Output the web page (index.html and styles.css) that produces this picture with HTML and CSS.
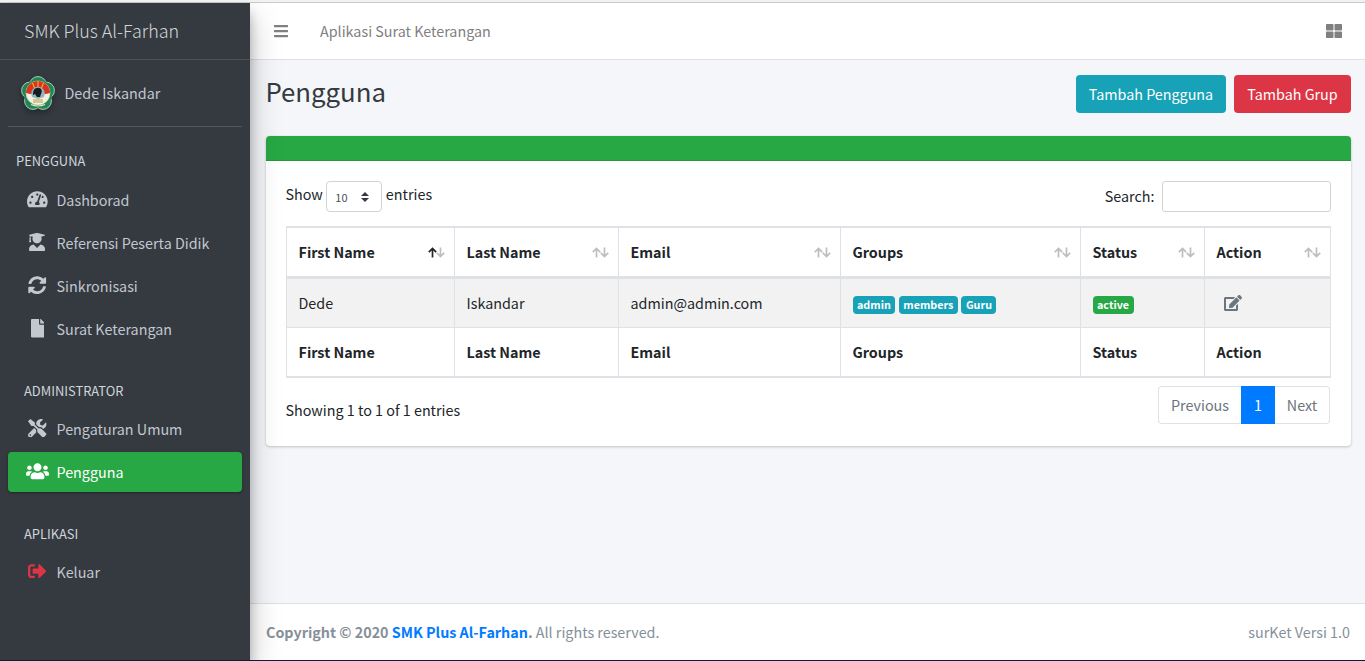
FILE: index.html
```html
<!DOCTYPE html>
<html lang="id">
<head>
<meta charset="utf-8">
<title>Pengguna</title>
<link rel="stylesheet" href="styles.css">
</head>
<body>
<svg class="defs" width="0" height="0">
  <symbol id="up" viewBox="0 0 9 11"><path d="M4.5 10.5V1.5M.8 5.2l3.7-3.8 3.7 3.8" fill="none" stroke="currentColor" stroke-width="1.7"/></symbol>
  <symbol id="down" viewBox="0 0 9 11"><path d="M4.5 .5v9M.8 5.8l3.7 3.8 3.7-3.8" fill="none" stroke="currentColor" stroke-width="1.7"/></symbol>
</svg>
<div class="app">
  <aside class="sidebar">
    <div class="brand"><span class="t-brand">SMK Plus Al-Farhan</span></div>
    <div class="side-body">
      <div class="user">
        <svg class="logo" viewBox="0 0 34 34">
          <g fill="#218653" stroke="#a9cdb9" stroke-width="1"><circle cx="17" cy="9" r="8.400"/><circle cx="25" cy="14.500" r="8.400"/><circle cx="22" cy="25" r="8.400"/><circle cx="12" cy="25" r="8.400"/><circle cx="9" cy="14.500" r="8.400"/></g>
          <circle cx="17" cy="17.500" r="14" fill="#218653"/>
          <circle cx="17" cy="17" r="12" fill="#f2f1e9" stroke="#d2d5a0" stroke-width=".7"/>
          <path d="M5 17a12 12 0 0 1 24 0l-4 1H9z" fill="#d8341f"/>
          <path d="M17 5v6M11.500 7l2 5M22.500 7l-2 5" stroke="#f0b03c" stroke-width="1.100"/>
          <circle cx="17" cy="17.500" r="6.800" fill="#8eb8bd"/>
          <path d="M12 19c0-4 1-7 4-7 4-1 6 3 4 6l-1 3h-3l-2-3z" fill="#171c22"/>
          <path d="M8 22c4-1 6 0 9 1 3-1 5-2 9-1l-2 4H10z" fill="#f4f0dc"/>
          <path d="M12 24h10M12 26h10" stroke="#b39d43" stroke-width="1"/>
          <path d="M10 28.500q7 3 14 0" stroke="#e9e4c8" stroke-width="1.200" fill="none"/>
        </svg>
        <span class="t-user">Dede Iskandar</span>
      </div>
      <nav class="nav">
        <div class="nav-header first"><span>PENGGUNA</span></div>
        <a class="nav-item"><span class="ico"><svg width="20.700" height="18.400" viewBox="0 0 576 512"><path d="M288 32C128.940 32 0 160.940 0 320c0 52.800 14.250 102.260 39.060 144.800 5.610 9.620 16.300 15.200 27.440 15.200h443c11.140 0 21.830-5.580 27.440-15.200C561.750 422.260 576 372.800 576 320c0-159.060-128.940-288-288-288zm0 64c14.710 0 26.580 10.130 30.320 23.650-1.110 2.260-2.640 4.230-3.450 6.670l-9.220 27.670c-5.130 3.490-10.970 6.010-17.640 6.010-17.670 0-32-14.330-32-32S270.330 96 288 96zM96 384c-17.670 0-32-14.330-32-32s14.330-32 32-32 32 14.330 32 32-14.330 32-32 32zm48-160c-17.670 0-32-14.330-32-32s14.330-32 32-32 32 14.330 32 32-14.330 32-32 32zm246.770-72.410l-61.330 184C343.130 347.330 352 364.540 352 384c0 11.720-3.380 22.550-8.880 32H232.880c-5.500-9.450-8.880-20.280-8.880-32 0-33.940 26.500-61.430 59.900-63.590l61.340-184.010c4.170-12.560 17.730-19.450 30.360-15.170 12.570 4.190 19.350 17.790 15.170 30.360zm14.660 57.200l15.520-46.550c3.470-1.290 7.130-2.230 11.050-2.230 17.670 0 32 14.330 32 32s-14.330 32-32 32c-11.380-.01-20.890-6.280-26.570-15.220zM480 384c-17.670 0-32-14.330-32-32s14.330-32 32-32 32 14.330 32 32-14.330 32-32 32z"/></svg></span><span>Dashborad</span></a>
        <a class="nav-item"><span class="ico"><svg width="16.100" height="18.400" viewBox="0 0 448 512"><path d="M319.400 320.600L224 416l-95.400-95.400C57.100 323.700 0 382.200 0 454.400v9.600c0 26.500 21.500 48 48 48h352c26.500 0 48-21.500 48-48v-9.600c0-72.200-57.100-130.700-128.600-133.800zM13.600 79.800l6.400 1.500v58.400c-7 4.200-12 11.500-12 20.300 0 8.400 4.600 15.400 11.100 19.700L3.500 242c-1.700 6.900 2.100 14 7.600 14h41.800c5.500 0 9.300-7.100 7.600-14l-15.600-62.300C51.400 175.400 56 168.400 56 160c0-8.800-5-16.100-12-20.300V87.100l66 15.900c-8.600 17.200-14 36.400-14 57 0 70.700 57.300 128 128 128s128-57.300 128-128c0-20.600-5.300-39.800-14-57l96.300-23.200c18.200-4.400 18.200-27.100 0-31.500l-190.400-46c-13-3.100-26.700-3.100-39.700 0L13.600 48.200c-18.100 4.400-18.100 27.200 0 31.600z"/></svg></span><span>Referensi Peserta Didik</span></a>
        <a class="nav-item"><span class="ico"><svg width="18.400" height="18.400" viewBox="0 0 512 512"><path d="M370.720 133.280C339.458 104.008 298.888 87.962 255.848 88c-77.458.068-144.328 53.178-162.791 126.850-1.344 5.363-6.122 9.150-11.651 9.150H24.103c-7.498 0-13.194-6.807-11.807-14.176C33.933 94.924 134.813 8 256 8c66.448 0 126.791 26.136 171.315 68.685L463.030 40.970C478.149 25.851 504 36.559 504 57.941V192c0 13.255-10.745 24-24 24H345.941c-21.382 0-32.090-25.851-16.971-40.971l41.750-41.749zM32 296h134.059c21.382 0 32.090 25.851 16.971 40.971l-41.750 41.750c31.262 29.273 71.835 45.319 114.876 45.280 77.418-.070 144.315-53.144 162.787-126.849 1.344-5.363 6.122-9.150 11.651-9.150h57.304c7.498 0 13.194 6.807 11.807 14.176C478.067 417.076 377.187 504 256 504c-66.448 0-126.791-26.136-171.315-68.685L48.970 471.030C33.851 486.149 8 475.441 8 454.059V320c0-13.255 10.745-24 24-24z"/></svg></span><span>Sinkronisasi</span></a>
        <a class="nav-item"><span class="ico"><svg width="13.800" height="18.400" viewBox="0 0 384 512"><path d="M224 136V0H24C10.700 0 0 10.700 0 24v464c0 13.300 10.700 24 24 24h336c13.300 0 24-10.700 24-24V160H248c-13.200 0-24-10.800-24-24zm160-14.100v6.100H256V0h6.100c6.400 0 12.500 2.500 17 7l97.900 98c4.500 4.500 7 10.600 7 16.900z"/></svg></span><span>Surat Keterangan</span></a>
        <div class="nav-header"><span>ADMINISTRATOR</span></div>
        <a class="nav-item"><span class="ico"><svg width="18.400" height="18.400" viewBox="0 0 512 512"><path d="M501.100 395.700L384 278.600c-23.100-23.100-57.600-27.600-85.400-13.900L192 158.100V96L64 0 0 64l96 128h62.100l106.600 106.600c-13.600 27.800-9.200 62.300 13.900 85.400l117.100 117.100c14.600 14.600 38.200 14.600 52.700 0l52.700-52.700c14.500-14.600 14.500-38.200 0-52.700zM331.700 225c28.300 0 54.900 11 74.900 31l19.400 19.400c15.800-6.900 30.800-16.500 43.800-29.500 37.100-37.100 49.700-89.300 37.900-136.700-2.200-9-13.500-12.100-20.100-5.500l-74.400 74.400-67.900-11.300L334 98.900l74.400-74.400c6.600-6.600 3.400-17.900-5.700-20.200-47.400-11.700-99.600.900-136.600 37.900-28.500 28.500-41.900 66.100-41.200 103.600l82.100 82.100c8.100-1.900 16.500-2.900 24.700-2.900zm-103.900 82l-56.700-56.700L18.700 402.800c-25 25-25 65.500 0 90.500s65.500 25 90.500 0l123.600-123.600c-7.600-19.900-9.900-41.600-5-62.700zM64 472c-13.200 0-24-10.800-24-24 0-13.300 10.700-24 24-24s24 10.700 24 24c0 13.200-10.700 24-24 24z"/></svg></span><span>Pengaturan Umum</span></a>
        <a class="nav-item active"><span class="ico"><svg width="23" height="18.400" viewBox="0 0 640 512"><path d="M96 224c35.300 0 64-28.700 64-64s-28.700-64-64-64-64 28.700-64 64 28.700 64 64 64zm448 0c35.300 0 64-28.700 64-64s-28.700-64-64-64-64 28.700-64 64 28.700 64 64 64zm32 32h-64c-17.600 0-33.500 7.100-45.100 18.600 40.300 22.100 68.900 62 75.100 109.400h66c17.700 0 32-14.300 32-32v-32c0-35.300-28.700-64-64-64zm-256 0c61.900 0 112-50.100 112-112S381.900 32 320 32 208 82.100 208 144s50.100 112 112 112zm76.800 32h-8.300c-20.800 10-43.900 16-68.500 16s-47.600-6-68.500-16h-8.300C179.600 288 128 339.600 128 403.200V432c0 26.500 21.500 48 48 48h288c26.500 0 48-21.500 48-48v-28.800c0-63.600-51.600-115.200-115.200-115.200zm-223.700-13.400C161.500 263.100 145.600 256 128 256H64c-35.300 0-64 28.700-64 64v32c0 17.700 14.300 32 32 32h65.900c6.300-47.400 34.900-87.300 75.200-109.400z"/></svg></span><span>Pengguna</span></a>
        <div class="nav-header"><span>APLIKASI</span></div>
        <a class="nav-item"><span class="ico danger"><svg width="18.400" height="18.400" viewBox="0 0 512 512"><path d="M497 273L329 441c-15 15-41 4.500-41-17v-96H152c-13.300 0-24-10.700-24-24v-96c0-13.300 10.700-24 24-24h136V88c0-21.400 25.900-32 41-17l168 168c9.300 9.400 9.300 24.600 0 34zM192 436v-40c0-6.600-5.400-12-12-12H96c-17.700 0-32-14.300-32-32V160c0-17.700 14.300-32 32-32h84c6.600 0 12-5.400 12-12V76c0-6.600-5.400-12-12-12H96c-53 0-96 43-96 96v192c0 53 43 96 96 96h84c6.600 0 12-5.400 12-12z"/></svg></span><span>Keluar</span></a>
      </nav>
    </div>
  </aside>
  <div class="main">
    <header class="topbar">
      <svg class="bars" width="14" height="16" viewBox="0 0 448 512"><path d="M16 132h416c8.800 0 16-7.200 16-16V76c0-8.800-7.200-16-16-16H16C7.200 60 0 67.200 0 76v40c0 8.800 7.200 16 16 16zm0 160h416c8.800 0 16-7.200 16-16v-40c0-8.800-7.200-16-16-16H16c-8.800 0-16 7.200-16 16v40c0 8.800 7.200 16 16 16zm0 160h416c8.800 0 16-7.200 16-16v-40c0-8.800-7.200-16-16-16H16c-8.800 0-16 7.200-16 16v40c0 8.800 7.200 16 16 16z"/></svg>
      <span class="app-name">Aplikasi Surat Keterangan</span>
      <svg class="grid-ico" width="16" height="16" viewBox="0 0 512 512"><path d="M296 32h192c13.255 0 24 10.745 24 24v160c0 13.255-10.745 24-24 24H296c-13.255 0-24-10.745-24-24V56c0-13.255 10.745-24 24-24zm-80 0H24C10.745 32 0 42.745 0 56v160c0 13.255 10.745 24 24 24h192c13.255 0 24-10.745 24-24V56c0-13.255-10.745-24-24-24zM0 296v160c0 13.255 10.745 24 24 24h192c13.255 0 24-10.745 24-24V296c0-13.255-10.745-24-24-24H24c-13.255 0-24 10.745-24 24zm296 184h192c13.255 0 24-10.745 24-24V296c0-13.255-10.745-24-24-24H296c-13.255 0-24 10.745-24 24v160c0 13.255 10.745 24 24 24z"/></svg>
    </header>
    <section class="content">
      <div class="page-head">
        <h1>Pengguna</h1>
        <div class="actions"><button class="btn info">Tambah Pengguna</button><button class="btn red">Tambah Grup</button></div>
      </div>
      <div class="card">
        <div class="card-head"></div>
        <div class="card-body">
          <div class="controls">
            <div class="length"><span>Show</span><span class="select"><span>10</span><svg width="8" height="10" viewBox="0 0 4 5"><path fill="#343a40" d="M2 0L0 2h4zm0 5L0 3h4z"/></svg></span><span>entries</span></div>
            <label class="search"><span>Search:</span><input type="text"></label>
          </div>
          <table>
            <colgroup><col class="c1"><col class="c2"><col class="c3"><col class="c4"><col class="c5"><col class="c6"></colgroup>
            <thead><tr>
              <th><div class="th"><span>First Name</span><span class="sort asc"><svg><use href="#up"/></svg><svg><use href="#down"/></svg></span></div></th>
              <th><div class="th"><span>Last Name</span><span class="sort"><svg><use href="#up"/></svg><svg><use href="#down"/></svg></span></div></th>
              <th><div class="th"><span>Email</span><span class="sort"><svg><use href="#up"/></svg><svg><use href="#down"/></svg></span></div></th>
              <th><div class="th"><span>Groups</span><span class="sort"><svg><use href="#up"/></svg><svg><use href="#down"/></svg></span></div></th>
              <th><div class="th"><span>Status</span><span class="sort"><svg><use href="#up"/></svg><svg><use href="#down"/></svg></span></div></th>
              <th><div class="th"><span>Action</span><span class="sort"><svg><use href="#up"/></svg><svg><use href="#down"/></svg></span></div></th>
            </tr></thead>
            <tbody><tr>
              <td>Dede</td><td>Iskandar</td><td>admin@admin.com</td>
              <td><div class="badges"><span class="badge">admin</span><span class="badge">members</span><span class="badge">Guru</span></div></td>
              <td><div class="badges"><span class="badge ok">active</span></div></td>
              <td><svg class="edit" width="18" height="16" viewBox="0 0 576 512"><path d="M402.600 83.200l90.200 90.200c3.800 3.800 3.800 10 0 13.800L274.400 405.600l-92.800 10.300c-12.400 1.400-22.900-9.100-21.500-21.500l10.300-92.800L388.800 83.200c3.800-3.800 10-3.800 13.800 0zm162-22.900l-48.800-48.800c-15.200-15.200-39.900-15.200-55.200 0l-35.400 35.400c-3.800 3.800-3.800 10 0 13.800l90.200 90.200c3.800 3.800 10 3.800 13.800 0l35.400-35.400c15.200-15.300 15.200-40 0-55.200zM384 346.200V448H64V128h229.800c3.200 0 6.200-1.300 8.500-3.500l40-40c7.600-7.600 2.200-20.500-8.500-20.500H48C21.500 64 0 85.500 0 112v352c0 26.500 21.500 48 48 48h352c26.500 0 48-21.500 48-48V306.200c0-10.700-12.900-16-20.500-8.500l-40 40c-2.200 2.300-3.500 5.300-3.500 8.500z"/></svg></td>
            </tr></tbody>
            <tfoot><tr><th>First Name</th><th>Last Name</th><th>Email</th><th>Groups</th><th>Status</th><th>Action</th></tr></tfoot>
          </table>
          <div class="table-foot">
            <span class="summary">Showing 1 to 1 of 1 entries</span>
            <div class="pages"><span class="page prev">Previous</span><span class="page current">1</span><span class="page next">Next</span></div>
          </div>
        </div>
      </div>
    </section>
    <footer class="footer">
      <span class="copy"><b>Copyright © 2020 <a>SMK Plus Al-Farhan</a>.</b> All rights reserved.</span>
      <span>surKet Versi 1.0</span>
    </footer>
  </div>
</div>
</body>
</html>
```
FILE: styles.css
```css
* { box-sizing: border-box; }
body {
  margin: 0;
  height: 661px;
  overflow: hidden;
  border-top: 2px solid #f1f1f1;
  border-bottom: 1px solid #141a3c;
  background: #f4f6f9;
  color: #212529;
  font: 14.340px/24px "Noto Sans CJK SC", "Open Sans", sans-serif;
}
svg { display: block; fill: currentColor; flex: none; }
.defs { position: absolute; }
span { white-space: nowrap; }
.app { display: flex; height: 658px; border-top: 1px solid #cbcbcd; }

.sidebar {
  width: 250px;
  flex: none;
  background: #343a40;
  color: #c2c7d0;
  box-shadow: 0 14px 28px rgba(0,0,0,.25), 0 10px 10px rgba(0,0,0,.22);
  z-index: 2;
}
.brand {
  height: 57px;
  padding: 0 24px 2px;
  display: flex;
  align-items: center;
  border-bottom: 1px solid #4b545c;
  color: rgba(255,255,255,.8);
  font-size: 17.900px;
  font-weight: 300;
}
.side-body { padding: 0 8px; }
.user {
  height: 67px;
  padding-left: 12.500px;
  display: flex;
  align-items: center;
  gap: 10px;
  border-bottom: 1px solid #4f5962;
}
.logo { width: 34px; height: 34px; filter: drop-shadow(0 3px 3px rgba(0,0,0,.3)); }
.nav-header {
  height: 56.400px;
  padding: 27.200px 16px 8px;
  font-size: 12.900px;
  line-height: 21.600px;
  color: #d0d4db;
}
.nav-header.first { height: 52.800px; padding: 23px 8px 8px; }
.nav-item {
  height: 40px;
  margin-bottom: 3.200px;
  padding-left: 15.500px;
  display: flex;
  align-items: center;
  gap: 5px;
  border-radius: 4px;
}
.ico { width: 28px; display: flex; justify-content: center; margin-top: -2px; }
.danger { color: #dc3545; }
.nav-item.active { background: #28a745; color: #fff; box-shadow: 0 1px 3px rgba(0,0,0,.12), 0 1px 2px rgba(0,0,0,.24); }

.main { flex: 1; display: flex; flex-direction: column; min-width: 0; }
.topbar {
  height: 57px;
  padding: 0 23px 0 24px;
  display: flex;
  align-items: center;
  background: #fff;
  border-bottom: 1px solid #dee2e6;
  color: #808080;
}
.app-name { margin-left: 32px; }
.grid-ico { margin-left: auto; }
.content { flex: 1; padding: 15px 14px 0 16px; }
.page-head { display: flex; justify-content: space-between; height: 61px; }
h1 { margin: 0 0 0 -.5px; font-size: 25.750px; line-height: 32px; font-weight: 400; color: #343a40; }
.actions { display: flex; gap: 8px; }
.btn { height: 38px; padding: 0; border: 0; border-radius: 4px; color: #fff; font: inherit; }
.info { width: 150px; background: #17a2b8; }
.red { width: 117px; background: #dc3545; }
.card { height: 310px; border-radius: 4px; background: #fff; box-shadow: 0 0 1px rgba(0,0,0,.125), 0 1px 3px rgba(0,0,0,.2); }
.card-head { height: 25px; background: #28a745; border-bottom: 1px solid #24963e; border-radius: 4px 4px 0 0; }
.card-body { padding: 20px 20px 0; }
.controls { display: flex; justify-content: space-between; height: 45px; }
.length { display: flex; gap: 3.500px; margin-left: -.5px; line-height: 26px; }
.select {
  width: 56px;
  height: 31px;
  padding: 0 12px 0 8px;
  display: flex;
  align-items: center;
  justify-content: space-between;
  border: 1px solid #ced4da;
  border-radius: 4px;
  color: #495057;
  font-size: 11px;
}
.search { display: flex; gap: 7.500px; line-height: 29px; }
.search input { width: 169px; height: 31px; border: 1px solid #ced4da; border-radius: 3px; }
table { width: 1045px; table-layout: fixed; border-collapse: separate; border-spacing: 0; }
.c1 { width: 168px; } .c2 { width: 164px; } .c3 { width: 222px; }
.c4 { width: 240px; } .c5 { width: 124px; } .c6 { width: 127px; }
th, td { padding: 0 0 0 11.500px; text-align: left; border-left: 1px solid #dee2e6; }
th:last-child, td:last-child { border-right: 1px solid #dee2e6; }
thead th { height: 53px; border-top: 2px solid #dee2e6; border-bottom: 3px solid #dee2e6; }
tbody td { height: 49px; background: #f2f2f2; border-bottom: 1px solid #dee2e6; }
tfoot th { height: 50px; border-bottom: 2px solid #dee2e6; }
.th { display: flex; align-items: center; justify-content: space-between; padding-right: 9px; }
.sort { display: flex; color: #bcbec0; }
.sort svg { width: 9px; height: 11px; }
.sort svg + svg { margin-left: -1px; }
.asc svg:first-child { color: #212529; }
.badges { display: flex; gap: 3.500px; padding-top: 3px; }
.badge { height: 18px; padding: 0 4.500px; border-radius: 4px; background: #17a2b8; color: #fff; font-size: 10.750px; line-height: 17px; font-weight: 700; }
.ok { background: #28a745; }
.edit { margin-left: 7.500px; color: #6c757d; }
.table-foot { display: flex; justify-content: space-between; padding: 8px 1px 0 0; }
.summary { padding-top: 12px; margin-left: -.5px; }
.pages { display: flex; height: 38px; line-height: 36px; color: #6c757d; text-align: center; }
.page { border: 1px solid #dee2e6; }
.prev { width: 83px; border-right: 0; border-radius: 4px 0 0 4px; }
.current { width: 34px; background: #007bff; border-color: #007bff; color: #fff; }
.next { width: 55px; border-left: 0; border-radius: 0 4px 4px 0; }
.footer {
  height: 57px;
  padding: 0 15px 0 16px;
  display: flex;
  align-items: center;
  justify-content: space-between;
  background: #fff;
  border-top: 1px solid #dee2e6;
  color: #869099;
}
.footer a { color: #007bff; }
```
